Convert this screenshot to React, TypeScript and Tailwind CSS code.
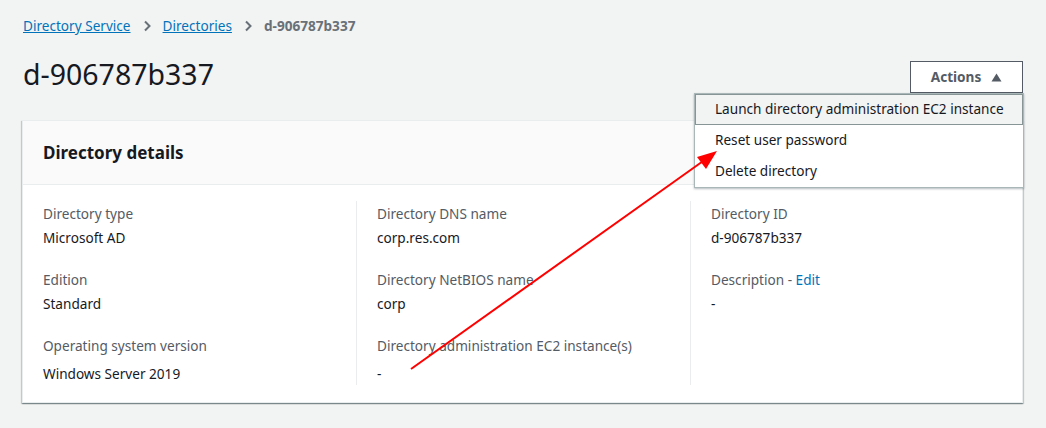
import React from "react";

const font = { fontFamily: '"Noto Sans", "Open Sans", Arial, sans-serif' };

function Field({ label, value, edit, last }: { label: string; value: string; edit?: boolean; last?: boolean }) {
  return (
    <div className={last ? "" : "mb-[20px]"}>
      <div className="text-[13.6px] leading-[22px] text-[#545b64]">
        {label}
        {edit && (
          <>
            {" - "}
            <span className="text-[#0073bb]">Edit</span>
          </>
        )}
      </div>
      <div className={`text-[13.6px] leading-[22px] text-[#16191f] ${last ? "mt-[6px]" : "mt-[2px]"}`}>{value}</div>
    </div>
  );
}

export default function App() {
  return (
    <div className="relative h-[428px] w-[1046px] overflow-hidden bg-[#f2f3f3]" style={font}>
      {/* Breadcrumb */}
      <div className="flex items-center gap-[10px] px-[23px] pt-[16px] text-[13.6px] leading-[20px]">
        <span className="text-[#0073bb] underline">Directory Service</span>
        <svg width="12" height="12" viewBox="0 0 12 12" className="text-[#687078]">
          <path d="M4 1.5 8.5 6 4 10.5" fill="none" stroke="currentColor" strokeWidth="2" />
        </svg>
        <span className="text-[#0073bb] underline">Directories</span>
        <svg width="12" height="12" viewBox="0 0 12 12" className="text-[#687078]">
          <path d="M4 1.5 8.5 6 4 10.5" fill="none" stroke="currentColor" strokeWidth="2" />
        </svg>
        <span className="font-bold text-[#687078]">d-906787b337</span>
      </div>

      {/* Title row */}
      <div className="flex items-start justify-between pl-[23px] pr-[23px] pt-[20px]">
        <h1 className="text-[28.5px] leading-[36px] text-[#16191f]">d-906787b337</h1>
        <div className="relative mt-[5px]">
          <button className="flex h-[32px] w-[113px] items-center justify-center gap-[10px] border border-[#545b64] bg-white text-[13.6px] font-bold text-[#545b64]">
            Actions
            <svg width="11" height="9" viewBox="0 0 11 9">
              <path d="M5.5 0.5 10.5 8.5H0.5Z" fill="#545b64" />
            </svg>
          </button>
        </div>
      </div>

      {/* Card */}
      <div className="ml-[22px] mr-[23px] mt-[27px] border border-[#eaeded] bg-white shadow-[0_1px_1px_0_rgba(0,28,36,0.3),1px_1px_1px_0_rgba(0,28,36,0.15),-1px_1px_1px_0_rgba(0,28,36,0.15)]">
        <div className="flex h-[64px] items-center border-b border-[#eaeded] bg-[#fafafa] px-[20px]">
          <h2 className="text-[17px] font-bold text-[#16191f]">Directory details</h2>
        </div>
        <div className="grid grid-cols-[313px_334px_1fr] px-[20px] pb-[17px] pt-[16px]">
          <div className="pr-[20px] pt-[2px]">
            <Field label="Directory type" value="Microsoft AD" />
            <Field label="Edition" value="Standard" />
            <Field label="Operating system version" value="Windows Server 2019" last />
          </div>
          <div className="border-l border-[#eaeded] pl-[20px] pr-[20px] pt-[2px]">
            <Field label="Directory DNS name" value="corp.res.com" />
            <Field label="Directory NetBIOS name" value="corp" />
            <Field label="Directory administration EC2 instance(s)" value="-" last />
          </div>
          <div className="border-l border-[#eaeded] pl-[20px] pt-[2px]">
            <Field label="Directory ID" value="d-906787b337" />
            <Field label="Description" value="-" edit />
          </div>
        </div>
      </div>

      {/* Dropdown menu */}
      <div className="absolute left-[694px] top-[93px] w-[330px] border border-[#aab7b8] bg-white text-[13.6px] text-[#16191f] shadow-[0_1px_2px_0_rgba(0,28,36,0.3)]">
        <div className="flex h-[31px] items-center whitespace-nowrap border border-[#879596] bg-[#f2f3f3] px-[19px]">
          Launch directory administration EC2 instance
        </div>
        <div className="flex h-[31px] items-center px-[20px]">Reset user password</div>
        <div className="flex h-[31px] items-center px-[20px]">Delete directory</div>
      </div>

      {/* Annotation arrow */}
      <svg className="pointer-events-none absolute left-0 top-0" width="1046" height="428">
        <line x1="411" y1="369" x2="706" y2="159" stroke="#ff0000" strokeWidth="2" />
        <path d="M717 151 L697 157 L706 169 Z" fill="#ff0000" />
      </svg>
    </div>
  );
}
